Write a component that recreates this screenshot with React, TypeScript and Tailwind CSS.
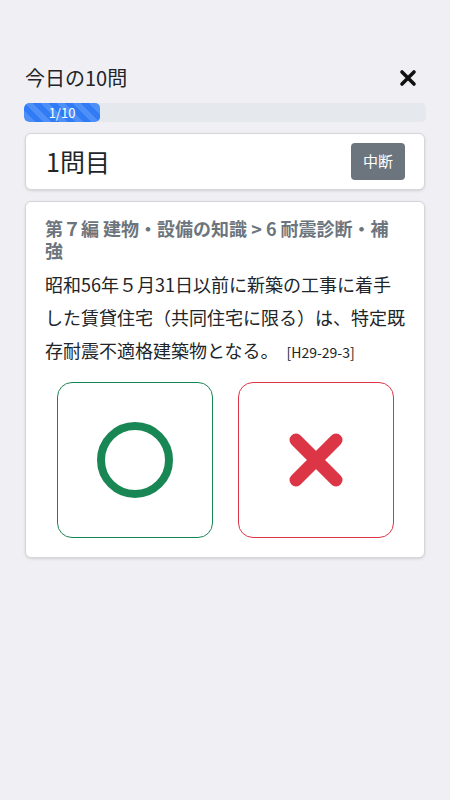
import React from 'react';

const font = 'font-["Noto_Sans_CJK_JP","Noto_Sans",sans-serif]';

const App: React.FC = () => {
  return (
    <div className={`min-h-[800px] w-[450px] bg-[#efeff4] px-[25px] pt-[62px] text-[#212529] ${font}`}>
      {/* HEADER */}
      <div className="flex items-center justify-between h-[32px]">
        <h1 className="text-[20px] leading-none font-normal">今日の10問</h1>
        <svg width="18" height="18" viewBox="0 0 18 18" className="mr-[8px]">
          <path d="M3 3 L15 15 M15 3 L3 15" stroke="#111" strokeWidth="3.6" strokeLinecap="round" />
        </svg>
      </div>

      {/* PROGRESS */}
      <div className="mt-[9px] -mx-px h-[19px] rounded-[5px] bg-[#e5e8ec] overflow-hidden flex">
        <div className="w-[76px] h-full rounded-[5px] bg-[#2f7cf6] bg-[linear-gradient(45deg,rgba(255,255,255,.15)_25%,transparent_25%,transparent_50%,rgba(255,255,255,.15)_50%,rgba(255,255,255,.15)_75%,transparent_75%,transparent)] bg-[length:16px_16px] flex items-center justify-center text-white text-[13px] leading-none">
          1/10
        </div>
      </div>

      {/* QUESTION NO */}
      <div className="mt-[11px] h-[57px] bg-white rounded-[6px] border border-[#d6d6da] shadow-[0_1px_3px_rgba(0,0,0,0.12)] flex items-center justify-between pl-[20px] pr-[19px]">
        <p className="text-[25px] leading-none">1問目</p>
        <button className="w-[54px] h-[37px] rounded-[4px] bg-[#6c757d] text-white text-[15px]">中断</button>
      </div>

      {/* QUESTION */}
      <div className="mt-[11px] bg-white rounded-[6px] border border-[#d6d6da] shadow-[0_1px_3px_rgba(0,0,0,0.12)] px-[19px] pt-[15px] pb-[19px]">
        <h2 className="max-w-[350px] text-[18px] leading-[22px] font-bold text-[#6c757d]">
          第７編 建物・設備の知識 &gt; 6 耐震診断・補強
        </h2>
        <p className="mt-[7px] text-[18px] leading-[33px]">
          昭和56年５月31日以前に新築の工事に着手した賃貸住宅（共同住宅に限る）は、特定既存耐震不適格建築物となる。
          <span className="text-[14px] leading-[20px] ml-[8px]">[H29-29-3]</span>
        </p>

        <div className="mt-[15px] flex justify-center gap-[25px]">
          <button className="w-[156px] h-[156px] rounded-[15px] border border-[#198754] flex items-center justify-center">
            <svg width="80" height="80" viewBox="0 0 80 80">
              <circle cx="40" cy="40" r="34" fill="none" stroke="#198754" strokeWidth="8" />
            </svg>
          </button>
          <button className="w-[156px] h-[156px] rounded-[15px] border border-[#dc3545] flex items-center justify-center">
            <svg width="60" height="60" viewBox="0 0 60 60">
              <path d="M10 10 L50 50 M50 10 L10 50" stroke="#dc3545" strokeWidth="13" strokeLinecap="round" />
            </svg>
          </button>
        </div>
      </div>
    </div>
  );
};

export default App;
